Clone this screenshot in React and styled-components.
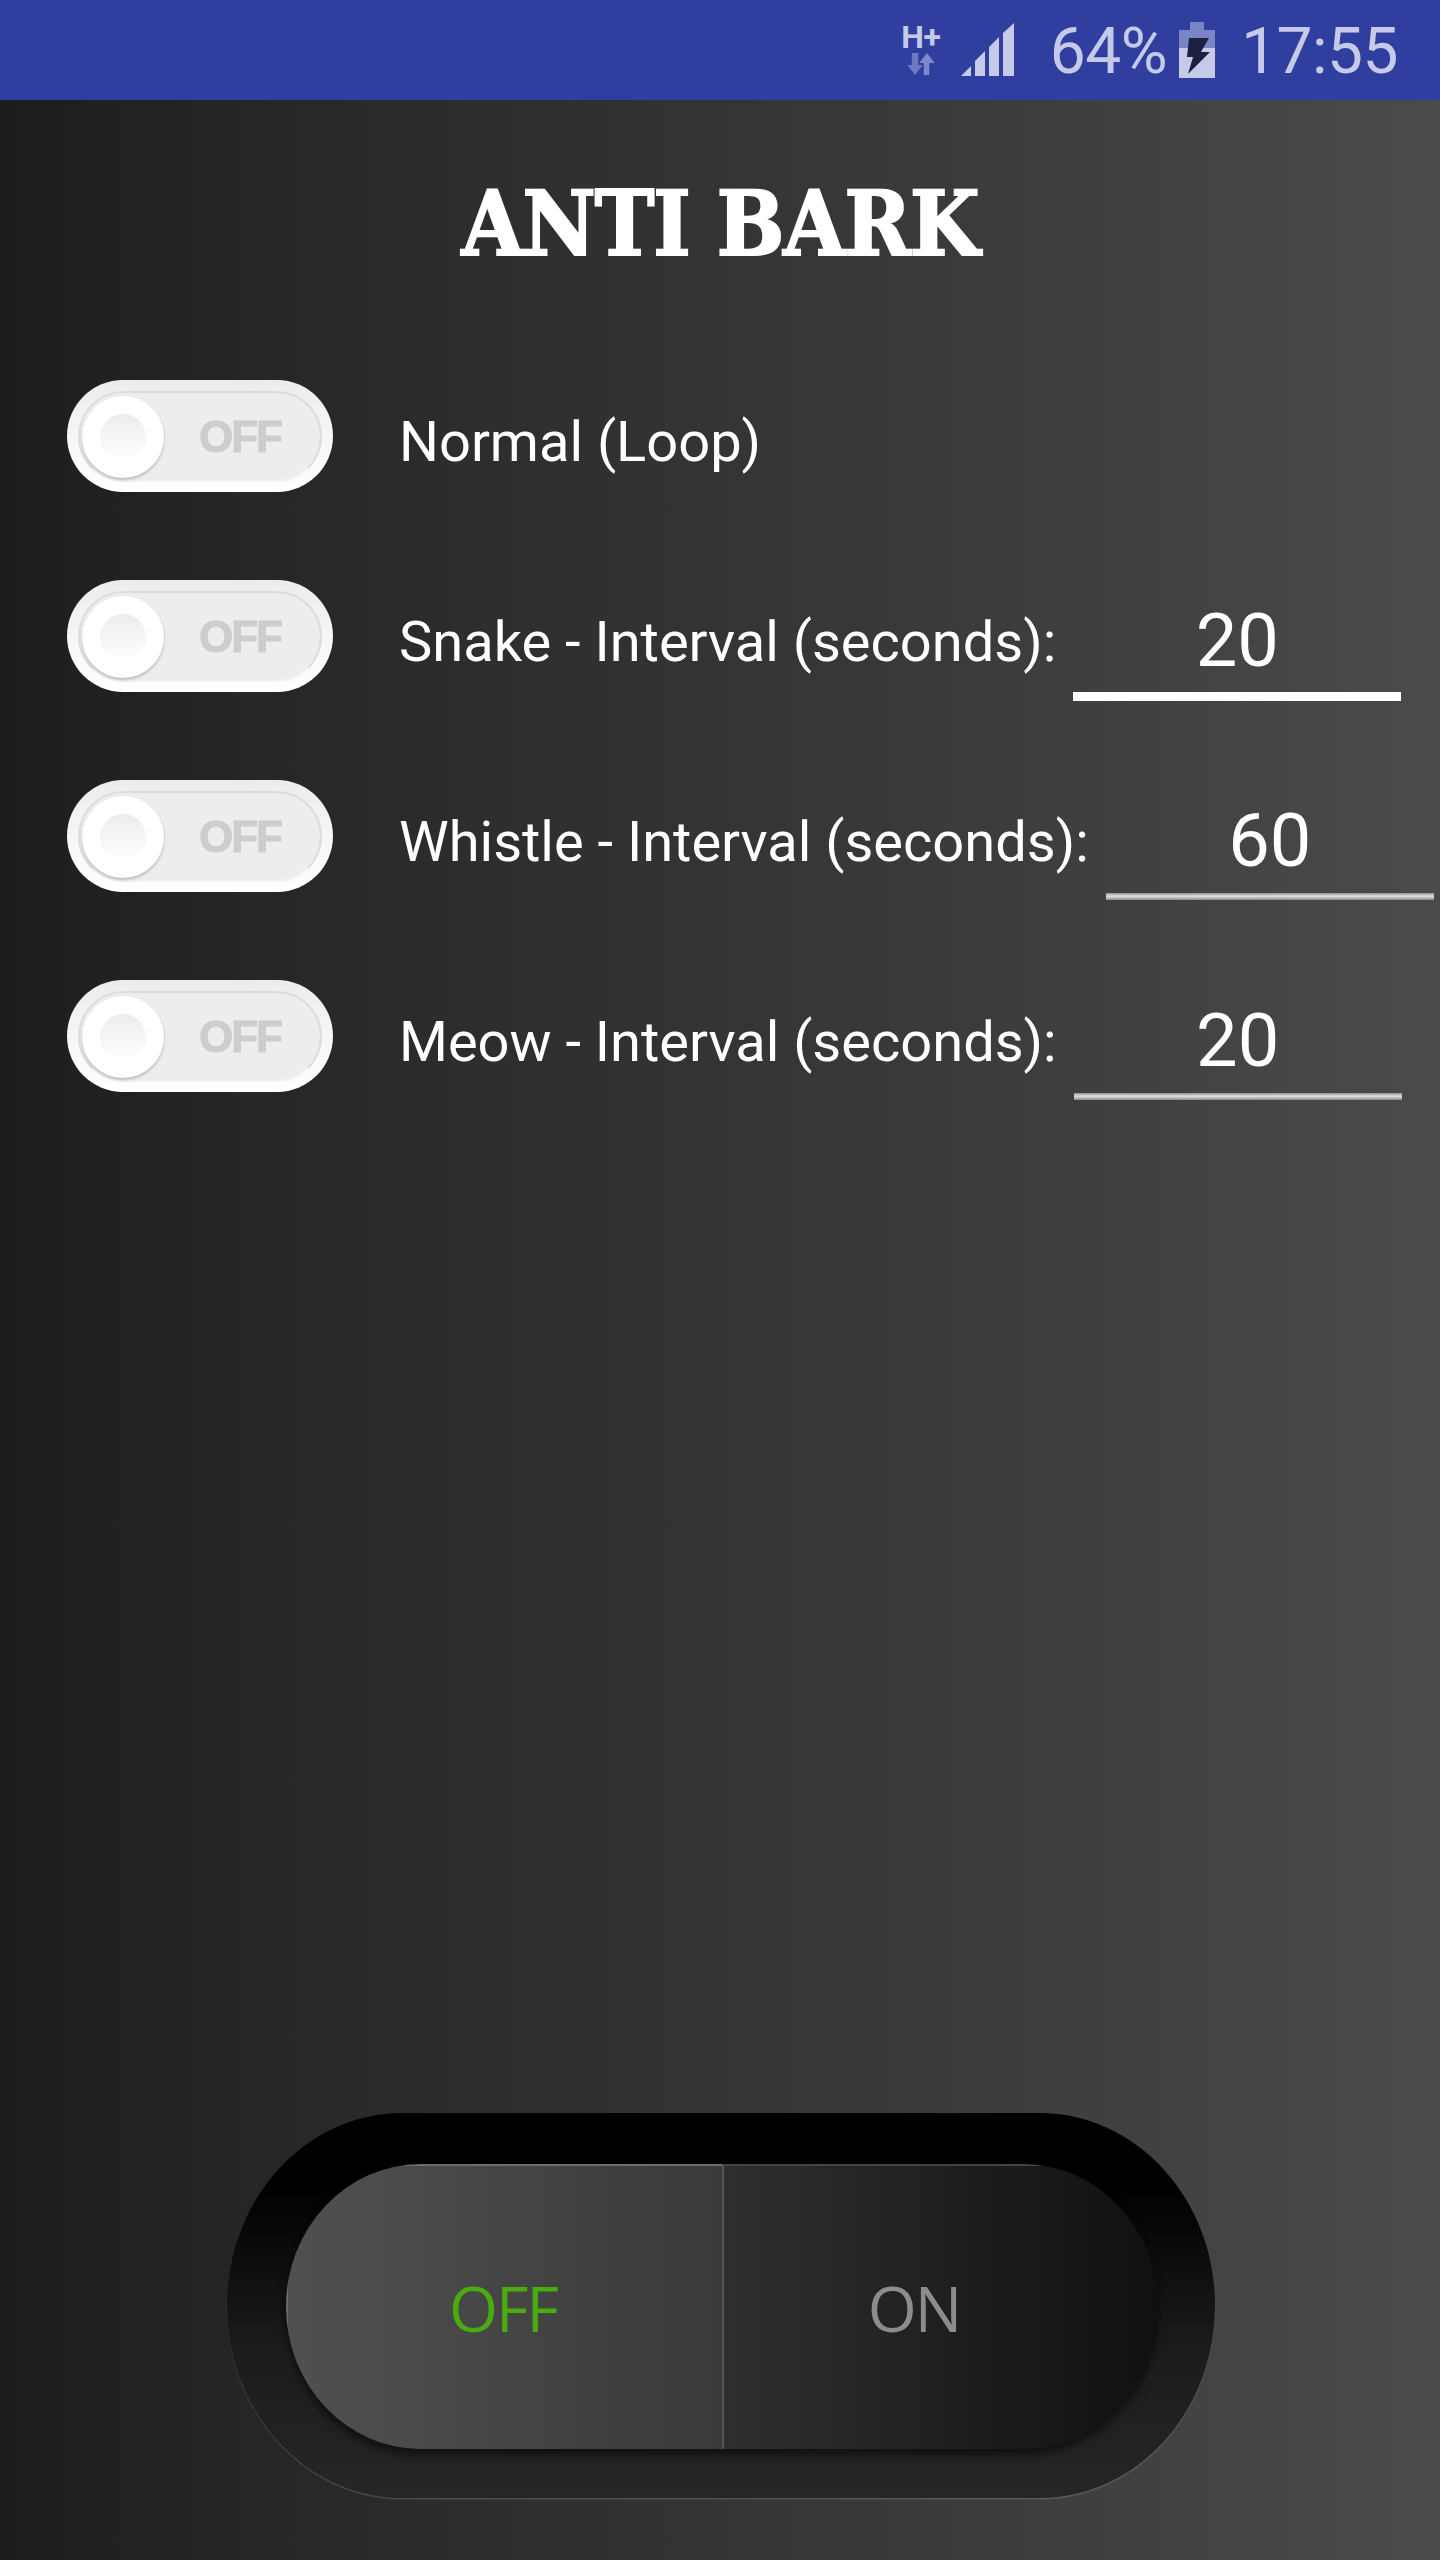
import React from 'react';
import styled, { createGlobalStyle } from 'styled-components';

const GlobalStyle = createGlobalStyle`
    html, body {
        margin: 0;
        padding: 0;
    }
    body {
        background: #2f2f2f;
        font-family: Roboto, "Liberation Sans", sans-serif;
    }
`;

const Screen = styled.div`
    width: 1440px;
    height: 2560px;
    display: flex;
    flex-direction: column;
    overflow: hidden;
    background: linear-gradient(90deg, #1d1d1d 0%, #2c2c2c 30%, #3a3a3a 65%, #4b4b4b 100%);
`;

const StatusBar = styled.div`
    height: 100px;
    flex: none;
    box-sizing: border-box;
    padding: 0 42px 0 0;
    display: flex;
    align-items: center;
    justify-content: flex-end;
    background: #2f3e9f;
    color: #c5cae9;
`;

const NetworkIcon = styled.div`
    width: 40px;
    height: 56px;
    margin-top: -2px;
    display: flex;
    flex-direction: column;
    align-items: center;
`;

const NetworkLabel = styled.span`
    font-size: 32px;
    line-height: 32px;
    font-weight: 700;
    letter-spacing: -0.5px;
    color: #c5cae9;
`;

const StatusText = styled.span`
    font-size: 64px;
    line-height: 100px;
    font-weight: 400;
    letter-spacing: -0.5px;
    padding-top: 4px;
    margin-left: ${props => props.gap}px;
`;

const SvgIcon = styled.svg`
    display: block;
    flex: none;
    margin-left: ${props => props.gap || 0}px;
`;

const Title = styled.h1`
    margin: 68px 0 0;
    height: 112px;
    text-align: center;
    font-family: "DejaVu Serif Condensed", "DejaVu Serif", serif;
    font-stretch: condensed;
    font-weight: 700;
    font-size: 89px;
    line-height: 112px;
    letter-spacing: -1px;
    color: #fff;
    -webkit-text-stroke: 2px #fff;
`;

const Options = styled.div`
    margin-top: 100px;
    padding-left: 67px;
    display: flex;
    flex-direction: column;
    gap: 88px;
`;

const Row = styled.div`
    height: 112px;
    display: flex;
    align-items: flex-start;
    white-space: nowrap;
`;

const Toggle = styled.div`
    width: 266px;
    height: 112px;
    flex: none;
    box-sizing: border-box;
    padding: 11px 11px 10px 11px;
    border-radius: 56px;
    background: linear-gradient(180deg, #ececec 0%, #f6f6f6 50%, #ffffff 100%);
`;

const ToggleTrack = styled.div`
    height: 100%;
    box-sizing: border-box;
    padding: 0 39px 0 2px;
    display: flex;
    align-items: center;
    justify-content: space-between;
    border-radius: 46px;
    background: #ecedef;
    border: 2px solid #dcdcdc;
    border-bottom-color: #f2f2f2;
`;

const ToggleKnob = styled.div`
    width: 82px;
    height: 82px;
    flex: none;
    display: flex;
    align-items: center;
    justify-content: center;
    border-radius: 50%;
    background: #fff;
    box-shadow: 0 2px 3px rgba(0, 0, 0, 0.22);

    &::after {
        content: '';
        width: 46px;
        height: 46px;
        border-radius: 50%;
        background: linear-gradient(180deg, #ececec 0%, #ffffff 100%);
    }
`;

const ToggleText = styled.span`
    font-family: "Liberation Sans", Arial, sans-serif;
    font-size: 44px;
    font-weight: 700;
    letter-spacing: -2px;
    color: #cdcdcd;
    -webkit-text-stroke: 1px #cdcdcd;
    filter: blur(0.7px);
`;

const Label = styled.div`
    margin-left: 66px;
    font-size: 56px;
    line-height: 125px;
    color: #fff;
`;

const IntervalField = styled.div`
    width: 328px;
    height: 121px;
    margin-left: 17px;
    flex: none;
    box-sizing: border-box;
    display: flex;
    align-items: center;
    justify-content: center;
    padding-top: ${props => props.focused ? '8px' : '0'};
    font-size: 74px;
    color: #fff;
    border-bottom: ${props => props.focused ? '9px solid #fff' : 'none'};
    position: relative;

    ${props => !props.focused && `
        &::after {
            content: '';
            position: absolute;
            left: 0;
            right: 0;
            bottom: 1px;
            height: 7px;
            background: linear-gradient(180deg, #8f8f8f 0%, #e2e2e2 45%, #8a8a8a 100%);
        }
    `}
`;

const BottomArea = styled.div`
    margin-top: auto;
    padding: 0 225px 62px 227px;
`;

const MasterSwitch = styled.div`
    height: 385px;
    box-sizing: border-box;
    padding: 51px 57px 49px 59px;
    border-radius: 175px / 50%;
    background: linear-gradient(180deg, #000 0%, #000 18%, #1c1c1c 62%, #262626 100%);
    box-shadow: 0 1.5px 1px rgba(255, 255, 255, 0.16);
`;

const SwitchBody = styled.div`
    height: 100%;
    display: flex;
    overflow: hidden;
    border-radius: 135px / 50%;
    box-shadow: 0 6px 8px rgba(0, 0, 0, 0.55);
`;

const SwitchSide = styled.div`
    width: 50%;
    flex: none;
    display: flex;
    align-items: center;
    justify-content: center;
    box-sizing: border-box;
    font-family: "Open Sans", "Noto Sans", sans-serif;
    font-size: 63px;
    font-weight: 400;
    letter-spacing: -2px;
    color: ${props => props.active ? '#49ab0e' : '#8c8c8c'};
    background: ${props => props.active
        ? 'linear-gradient(90deg, #505050 0%, #3a3a3a 100%)'
        : 'linear-gradient(90deg, #2f2f2f 0%, #101010 100%)'};
    border-top: 2px solid ${props => props.active ? '#6c6c6c' : '#444'};
    border-left: 2px solid ${props => props.active ? '#6a6a6a' : '#555'};
    padding-right: ${props => props.active ? '4px' : '54px'};
`;

const App = () => {
    const options = [
        { name: 'Normal (Loop)' },
        { name: 'Snake - Interval (seconds):', value: '20', focused: true },
        { name: 'Whistle - Interval (seconds):', value: '60' },
        { name: 'Meow - Interval (seconds):', value: '20' },
    ];

    return (
        <Screen>
            <GlobalStyle />
            <StatusBar>
                <NetworkIcon>
                    <NetworkLabel>H+</NetworkLabel>
                    <SvgIcon width="32" height="22" viewBox="0 0 32 24">
                        <path d="M6 0h7v13h5L9.500 24 1 13h5z" fill="#6f79bd" />
                        <path d="M19 24h6V11h6L22.500 0 14 11h5z" fill="#7f89c9" />
                    </SvgIcon>
                </NetworkIcon>
                <SvgIcon gap={20} width="53" height="54" viewBox="0 0 53 54">
                    <path d="M0 53 10 43V53z M14 53V38L24 28V53z M28 53V24L38 14V53z M42 53V10L53 0V53z" fill="#c5cae9" />
                </SvgIcon>
                <StatusText gap={36}>64%</StatusText>
                <SvgIcon gap={12} width="36" height="56" viewBox="0 0 36 56">
                    <path d="M11 0h14v8h11v18H0V8h11z" fill="#7b85c6" />
                    <path d="M0 26h36v30H0z" fill="#c5cae9" />
                    <path d="M10 16h20l-8 14h9L9 52l5-17H8z" fill="#1d2140" />
                </SvgIcon>
                <StatusText gap={26}>17:55</StatusText>
            </StatusBar>

            <Title>ANTI BARK</Title>

            <Options>
                {options.map((option) => (
                    <Row key={option.name}>
                        <Toggle>
                            <ToggleTrack>
                                <ToggleKnob />
                                <ToggleText>OFF</ToggleText>
                            </ToggleTrack>
                        </Toggle>
                        <Label>{option.name}</Label>
                        {option.value && (
                            <IntervalField focused={option.focused}>{option.value}</IntervalField>
                        )}
                    </Row>
                ))}
            </Options>

            <BottomArea>
                <MasterSwitch>
                    <SwitchBody>
                        <SwitchSide active>OFF</SwitchSide>
                        <SwitchSide>ON</SwitchSide>
                    </SwitchBody>
                </MasterSwitch>
            </BottomArea>
        </Screen>
    );
};

export default App;
